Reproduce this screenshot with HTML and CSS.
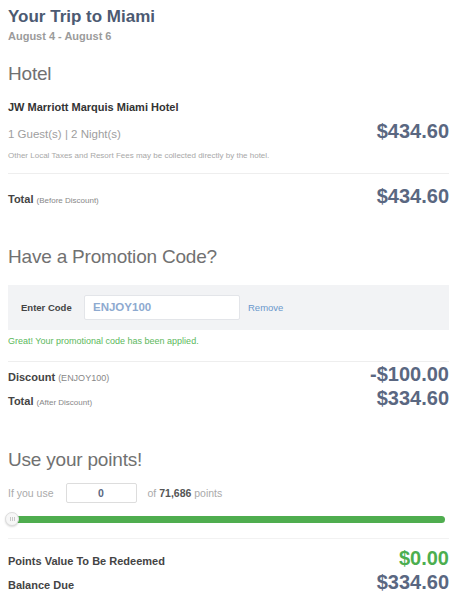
FILE: index.html
```html
<!DOCTYPE html>
<html>
<head>
<meta charset="utf-8">
<link rel="stylesheet" href="styles.css">
</head>
<body>
<div class="page">
  <h1 class="trip-title">Your Trip to Miami</h1>
  <div class="trip-dates">August 4 - August 6</div>

  <h2 class="section-title hotel-title">Hotel</h2>
  <div class="hotel-name">JW Marriott Marquis Miami Hotel</div>
  <div class="row guests-row">
    <span class="guests">1 Guest(s) | 2 Night(s)</span>
    <span class="price">$434.60</span>
  </div>
  <div class="fine-print">Other Local Taxes and Resort Fees may be collected directly by the hotel.</div>
  <div class="divider divider-hotel"></div>
  <div class="row total-row">
    <span class="label">Total <small>(Before Discount)</small></span>
    <span class="price">$434.60</span>
  </div>

  <h2 class="section-title promo-title">Have a Promotion Code?</h2>
  <div class="promo-box">
    <span class="promo-label">Enter Code</span>
    <div class="promo-input">ENJOY100</div>
    <span class="promo-remove">Remove</span>
  </div>
  <div class="promo-success">Great! Your promotional code has been applied.</div>
  <div class="divider divider-promo"></div>
  <div class="row">
    <span class="label">Discount <small class="code">(ENJOY100)</small></span>
    <span class="price">-$100.00</span>
  </div>
  <div class="row">
    <span class="label">Total <small>(After Discount)</small></span>
    <span class="price">$334.60</span>
  </div>

  <h2 class="section-title points-title">Use your points!</h2>
  <div class="points-input-row">
    <span class="muted">If you use</span>
    <div class="points-input">0</div>
    <span class="muted">of <b class="points-total">71,686</b> points</span>
  </div>
  <div class="slider">
    <div class="slider-track"></div>
    <div class="slider-thumb"><i></i><i></i><i></i></div>
  </div>
  <div class="divider divider-points"></div>
  <div class="row first-points-row">
    <span class="label">Points Value To Be Redeemed</span>
    <span class="price price-green">$0.00</span>
  </div>
  <div class="row">
    <span class="label">Balance Due</span>
    <span class="price">$334.60</span>
  </div>
</div>
</body>
</html>
```

FILE: styles.css
```css
body {
  margin: 0;
  background: #ffffff;
  font-family: "Liberation Sans", Arial, sans-serif;
}

.page {
  padding: 7px 7px 0 8px;
}

.trip-title {
  margin: 0;
  font-size: 17px;
  line-height: 20px;
  font-weight: 700;
  color: #4c5a72;
}

.trip-dates {
  margin-top: 2px;
  font-size: 11px;
  line-height: 14px;
  font-weight: 700;
  color: #9b9b9b;
}

.section-title {
  margin: 0;
  font-size: 19px;
  line-height: 24px;
  font-weight: 400;
  color: #717171;
  letter-spacing: -0.2px;
}

.hotel-title {
  margin-top: 19px;
}

.hotel-name {
  margin-top: 14px;
  font-size: 11px;
  line-height: 14px;
  font-weight: 700;
  color: #333333;
}

.row {
  display: flex;
  justify-content: space-between;
  align-items: baseline;
}

.price {
  font-size: 20px;
  line-height: 24px;
  font-weight: 700;
  color: #5a6781;
}

.price-green {
  color: #4cae4f;
}

.guests-row {
  margin-top: 5px;
}

.guests {
  font-size: 11.5px;
  color: #9e9e9e;
}

.fine-print {
  margin-top: 8px;
  font-size: 8px;
  line-height: 10px;
  color: #a8a8a8;
}

.divider {
  height: 1px;
  background: #eeeeee;
}

.divider-hotel {
  margin-top: 12px;
}

.total-row {
  margin-top: 10px;
}

.label {
  font-size: 11px;
  font-weight: 700;
  color: #444444;
}

.label small {
  font-size: 8px;
  font-weight: 400;
  color: #888888;
}

.label small.code {
  font-size: 9px;
}

.promo-title {
  margin-top: 37px;
}

.promo-box {
  margin-top: 16px;
  background: #f2f3f5;
  padding: 10px 13px;
  display: flex;
  align-items: center;
}

.promo-label {
  width: 63px;
  font-size: 9.5px;
  font-weight: 700;
  color: #444444;
}

.promo-input {
  box-sizing: border-box;
  width: 156px;
  height: 25px;
  background: #ffffff;
  border: 1px solid #e3e5e9;
  border-radius: 2px;
  padding-left: 8px;
  font-size: 11.5px;
  line-height: 23px;
  font-weight: 700;
  color: #8eaad0;
}

.promo-remove {
  margin-left: 8px;
  font-size: 9.5px;
  color: #6a98cc;
}

.promo-success {
  margin-top: 5px;
  font-size: 9px;
  line-height: 12px;
  color: #5cb85c;
}

.divider-promo {
  margin-top: 14px;
}

.points-title {
  margin-top: 38px;
}

.points-input-row {
  margin-top: 11px;
  display: flex;
  align-items: center;
}

.muted {
  font-size: 10.5px;
  color: #aaaaaa;
}

.points-input {
  box-sizing: border-box;
  width: 71px;
  height: 20px;
  margin: 0 11px 0 12px;
  border: 1px solid #dddddd;
  border-radius: 2px;
  text-align: center;
  font-size: 10.5px;
  line-height: 18px;
  font-weight: 700;
  color: #5a6781;
}

.points-total {
  color: #555555;
}

.slider {
  position: relative;
  margin-top: 9px;
  height: 14px;
  display: flex;
  align-items: center;
}

.slider-track {
  flex: 1;
  height: 7px;
  margin-right: 4px;
  border-radius: 4px;
  background: #4fad4f;
}

.slider-thumb {
  position: absolute;
  left: -3px;
  top: 0;
  box-sizing: border-box;
  width: 14px;
  height: 14px;
  border-radius: 50%;
  background: #f7f7f7;
  border: 1px solid #dddddd;
  box-shadow: 0 1px 2px rgba(0, 0, 0, 0.15);
  display: flex;
  align-items: center;
  justify-content: center;
  gap: 1px;
}

.slider-thumb i {
  width: 1px;
  height: 4px;
  background: #c8c8c8;
}

.divider-points {
  margin-top: 12px;
  background: #f2f2f2;
}

.first-points-row {
  margin-top: 7px;
}
```
